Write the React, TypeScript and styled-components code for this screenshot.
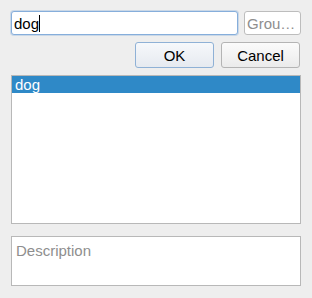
import styled, { createGlobalStyle } from "styled-components";

const GlobalStyle = createGlobalStyle`
  html, body {
    margin: 0;
    padding: 0;
    background: #eeeeee;
  }
  body {
    font-family: "Liberation Sans", Arial, sans-serif;
  }
`;

const Dialog = styled.div`
  width: 312px;
  height: 298px;
  box-sizing: border-box;
  padding: 11px 11px 12px 11px;
  display: flex;
  flex-direction: column;
  background: #eeeeee;
`;

const TopRow = styled.div`
  display: flex;
  gap: 6px;
  height: 24px;
`;

const TextInput = styled.div<{ $focused?: boolean; $width?: string }>`
  box-sizing: border-box;
  flex: ${({ $width }) => ($width ? `0 0 ${$width}` : "1")};
  height: 24px;
  background: #ffffff;
  border: 1px solid ${({ $focused }) => ($focused ? "#86aedb" : "#bdbdbd")};
  border-radius: 3px;
  box-shadow: ${({ $focused }) =>
    $focused ? "0 0 0 1px rgba(134, 174, 219, 0.35)" : "none"};
  padding: 0 3px 0 2px;
  display: flex;
  align-items: center;
  font-size: 15px;
  color: #000;
  overflow: hidden;
  white-space: nowrap;
`;

const Placeholder = styled.span`
  color: #8e8e8e;
`;

const Caret = styled.span`
  display: inline-block;
  width: 1px;
  height: 17px;
  background: #000;
  vertical-align: middle;
`;

const ButtonRow = styled.div`
  display: flex;
  justify-content: flex-end;
  gap: 7px;
  margin-top: 7px;
  padding-right: 1px;
`;

const Button = styled.button<{ $default?: boolean }>`
  box-sizing: border-box;
  width: 79px;
  height: 26px;
  font-family: "Liberation Sans", Arial, sans-serif;
  font-size: 15px;
  color: #000;
  border: 1px solid ${({ $default }) => ($default ? "#8fb1d6" : "#b4b4b4")};
  border-radius: 3px;
  background: ${({ $default }) =>
    $default
      ? "linear-gradient(#f6f8fb, #e6eaf0)"
      : "linear-gradient(#fbfbfb, #ebebeb)"};
  padding: 0;
`;

const List = styled.div`
  box-sizing: border-box;
  margin-top: 7px;
  height: 150px;
  background: #ffffff;
  border: 1px solid #b8b8b8;
`;

const ListItem = styled.div<{ $selected?: boolean }>`
  height: 17px;
  line-height: 17px;
  padding-left: 3px;
  font-size: 15px;
  color: ${({ $selected }) => ($selected ? "#ffffff" : "#000")};
  background: ${({ $selected }) => ($selected ? "#2f89c7" : "transparent")};
`;

const Description = styled.div`
  box-sizing: border-box;
  margin-top: 12px;
  height: 50px;
  background: #ffffff;
  border: 1px solid #b8b8b8;
  padding: 5px 4px;
  font-size: 15px;
  color: #8e8e8e;
`;

export default function App() {
  return (
    <>
      <GlobalStyle />
      <Dialog>
        <TopRow>
          <TextInput $focused>
            dog
            <Caret />
          </TextInput>
          <TextInput $width="57px">
            <Placeholder>Grou…</Placeholder>
          </TextInput>
        </TopRow>
        <ButtonRow>
          <Button $default>OK</Button>
          <Button>Cancel</Button>
        </ButtonRow>
        <List>
          <ListItem $selected>dog</ListItem>
        </List>
        <Description>Description</Description>
      </Dialog>
    </>
  );
}
